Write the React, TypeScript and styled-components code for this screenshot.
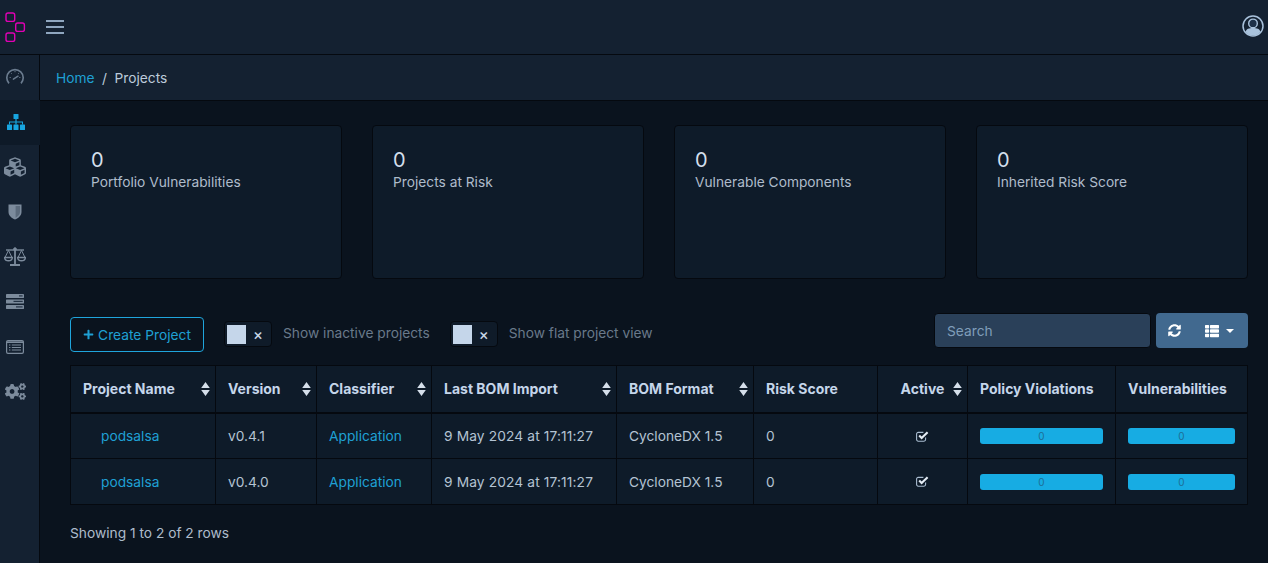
import React from 'react';
import styled, { createGlobalStyle } from 'styled-components';
import { FaCogs, FaCubes, FaPlus, FaSyncAlt, FaThList } from 'react-icons/fa';

const GlobalStyle = createGlobalStyle`
  html, body { margin: 0; padding: 0; height: 100%; }
  body {
    background: #0a131e;
    font-family: Inter, "Liberation Sans", sans-serif;
    font-size: 13.75px;
    color: #c8d6e6;
    overflow: hidden;
  }
`;

const Page = styled.div`
  width: 1268px;
  height: 563px;
  display: flex;
  flex-direction: column;
  overflow: hidden;
`;

const Header = styled.header`
  height: 54px;
  flex: none;
  display: flex;
  align-items: center;
  justify-content: space-between;
  background: #142131;
  border-bottom: 1px solid #05090f;
  padding: 0 4px;
`;

const HeaderLeft = styled.div`
  display: flex;
  align-items: center;
  gap: 20px;
`;

const MenuBars = styled.div`
  width: 18px;
  height: 14px;
  display: flex;
  flex-direction: column;
  justify-content: space-between;
  & > span { height: 2px; background: #8fa6bf; display: block; }
`;

const UserIcon = styled.svg`
  margin-bottom: 2px;
`;

const Body = styled.div`
  flex: 1;
  display: flex;
  min-height: 0;
`;

const Sidebar = styled.nav`
  width: 39px;
  flex: none;
  background: #142131;
  border-right: 1px solid #05090f;
  display: flex;
  flex-direction: column;
`;

const SideItem = styled.div<{ $active?: boolean }>`
  height: 45px;
  box-sizing: border-box;
  padding: 0 9px 2px 0;
  margin-right: ${(p) => (p.$active ? '-1px' : '0')};
  display: flex;
  align-items: center;
  justify-content: center;
  color: ${(p) => (p.$active ? '#17a5e0' : '#7c8b9c')};
  background: ${(p) => (p.$active ? '#0e1a28' : 'transparent')};
`;

const Content = styled.main`
  flex: 1;
  min-width: 0;
  display: flex;
  flex-direction: column;
`;

const Breadcrumb = styled.div`
  height: 45px;
  flex: none;
  display: flex;
  align-items: center;
  gap: 7.5px;
  padding: 0 16px;
  background: #142131;
  border-bottom: 1px solid #05090f;
  color: #bccbdb;
`;

const Link = styled.a`
  color: #1fa0d4;
`;

const Inner = styled.div`
  padding: 24px 20px 0 30px;
`;

const Cards = styled.section`
  display: grid;
  grid-template-columns: repeat(4, 272px);
  gap: 30px;
`;

const Card = styled.div`
  height: 154px;
  box-sizing: border-box;
  padding: 23px 20px;
  background: #0e1b29;
  border: 1px solid #05090f;
  border-radius: 4px;
`;

const CardValue = styled.div`
  font-size: 20px;
  line-height: 22px;
  color: #d3dfec;
`;

const CardLabel = styled.div`
  line-height: 22px;
  color: #aebccb;
`;

const Toolbar = styled.div`
  margin-top: 34px;
  height: 36px;
  display: flex;
  align-items: flex-start;
`;

const CreateButton = styled.button`
  width: 134px;
  height: 35px;
  margin-top: 4px;
  box-sizing: border-box;
  background: transparent;
  border: 1px solid #1fa5dc;
  border-radius: 4px;
  color: #1fa0d4;
  font: inherit;
  display: flex;
  align-items: center;
  justify-content: center;
  gap: 4px;
  svg { font-size: 11px; }
`;

const ToggleWrap = styled.div`
  display: flex;
  align-items: center;
  gap: 11px;
  margin-left: 20px;
  margin-top: 8px;
`;

const ToggleBox = styled.div`
  width: 48px;
  height: 26px;
  box-sizing: border-box;
  padding: 2px;
  background: #0f1b29;
  border: 1px solid #05090f;
  border-radius: 4px;
  display: flex;
  align-items: center;
  justify-content: space-between;
`;

const ToggleKnob = styled.span`
  width: 19px;
  height: 19px;
  background: #c5d6ea;
`;

const ToggleX = styled.span`
  width: 22px;
  text-align: center;
  color: #c8d6e6;
  font-size: 15px;
  font-weight: 500;
`;

const ToggleLabel = styled.span`
  color: #69798a;
  margin-top: -2px;
`;

const ToolbarRight = styled.div`
  margin-left: auto;
  display: flex;
  align-items: center;
  gap: 5px;
`;

const Search = styled.input`
  width: 217px;
  height: 35px;
  box-sizing: border-box;
  padding: 0 12px;
  background: #2a4059;
  border: 1px solid #05090f;
  border-radius: 4px;
  font: inherit;
  color: #c8d6e6;
  &::placeholder { color: #7f9db9; opacity: 1; }
`;

const ActionGroup = styled.div`
  width: 92px;
  height: 35px;
  box-sizing: border-box;
  background: #41698f;
  border-radius: 4px;
  color: #fff;
  display: flex;
  align-items: center;
  padding-left: 12px;
  font-size: 14px;
`;

const ListIcon = styled(FaThList)`
  margin-left: 24px;
`;

const Caret = styled.span`
  width: 0;
  height: 0;
  margin-left: 7px;
  border-left: 4px solid transparent;
  border-right: 4px solid transparent;
  border-top: 4px solid #fff;
`;

const Table = styled.table`
  margin-top: 16px;
  width: 1177px;
  table-layout: fixed;
  border-collapse: collapse;
  background: #0e1b29;
`;

const Th = styled.th<{ $center?: boolean }>`
  position: relative;
  height: 47px;
  padding: 0 12px;
  box-sizing: border-box;
  border: 1px solid #05090f;
  border-bottom-width: 2px;
  text-align: ${(p) => (p.$center ? 'center' : 'left')};
  font-size: 14px;
  font-weight: 700;
  color: #c5d6ea;
`;

const SortIcon = styled.svg`
  position: absolute;
  right: 5px;
  top: 16px;
`;

const Td = styled.td<{ $center?: boolean }>`
  height: 46px;
  padding: 0 12px;
  box-sizing: border-box;
  border: 1px solid #05090f;
  color: #b4c3d3;
  text-align: ${(p) => (p.$center ? 'center' : 'left')};
`;

const NameCell = styled(Td)`
  padding-left: 30px;
`;

const DateCell = styled(Td)`
  letter-spacing: 0.13px;
`;

const CheckIcon = styled.svg`
  display: inline-block;
  vertical-align: middle;
  margin-bottom: 2px;
`;

const Bar = styled.div`
  height: 16px;
  background: #17ace3;
  border-radius: 3px;
  color: #1d6f96;
  font-size: 10px;
  line-height: 16px;
  text-align: center;
`;

const Footer = styled.div`
  margin-top: 20px;
  color: #aebccb;
`;

function Logo() {
  return (
    <svg width="22" height="38" viewBox="0 0 22 38" fill="none" stroke="#e000b4" strokeWidth="1.4">
      <rect x="2" y="5" width="8.7" height="8.4" rx="2" />
      <rect x="11.7" y="15" width="8.7" height="8.4" rx="2" />
      <rect x="2" y="25" width="8.7" height="8.4" rx="2" />
    </svg>
  );
}

function User() {
  return (
    <UserIcon width="22" height="22" viewBox="0 0 22 22">
      <circle cx="11" cy="11" r="10" fill="none" stroke="#a9c2dc" strokeWidth="1.5" />
      <path d="M3.6 17 C4.2 13.8 7 13 11 13 C15 13 17.8 13.8 18.4 17 C16.6 19.4 14 20.6 11 20.6 C8 20.6 5.4 19.4 3.6 17 Z" fill="#a9c2dc" />
      <circle cx="11" cy="8.4" r="4.3" fill="#1d3048" stroke="#a9c2dc" strokeWidth="1.4" />
    </UserIcon>
  );
}

function Gauge() {
  return (
    <svg width="18" height="18" viewBox="0 0 18 18" fill="none" stroke="#6b7c8f">
      <path d="M3 15.4 A8.2 8.2 0 1 1 15 15.4" strokeWidth="1.6" />
      <path d="M3.6 9.5 H4.8 M5 5 L5.8 5.8 M9 3 V4.2 M13 5 L12.2 5.8 M14.4 9.5 H13.2" strokeWidth="0.9" />
      <path d="M7.4 11.2 L12 8.2" strokeWidth="1.5" strokeLinecap="round" />
    </svg>
  );
}

function Sitemap() {
  return (
    <svg width="18" height="16" viewBox="0 0 18 16" fill="currentColor">
      <rect x="6.5" y="0" width="5" height="5" rx="0.6" />
      <rect x="0" y="10.5" width="5" height="5.5" rx="0.6" />
      <rect x="6.5" y="10.5" width="5" height="5.5" rx="0.6" />
      <rect x="13" y="10.5" width="5" height="5.5" rx="0.6" />
      <path d="M8.4 5 H9.6 V7.4 H16 V10.5 H15 V8.4 H9.6 V10.5 H8.4 V8.4 H3 V10.5 H2 V7.4 H8.4 Z" />
    </svg>
  );
}

function Shield() {
  return (
    <svg width="14" height="16" viewBox="0 0 14 16">
      <path d="M0.5 0.5 H13.5 V8 C13.5 11.5 10.5 14 7 15.6 C3.5 14 0.5 11.5 0.5 8 Z" fill="currentColor" />
      <path d="M7.6 2 H12 V8 C12 10.4 10 12.4 7.6 13.7 Z" fill="#5c6b7c" />
    </svg>
  );
}

function Scale() {
  return (
    <svg width="22" height="19" viewBox="0 0 22 19" fill="none" stroke="currentColor">
      <path d="M11 1 V17 M6 18 H16" strokeWidth="1.8" />
      <path d="M2 3 H20" strokeWidth="1.4" />
      <circle cx="11" cy="2.2" r="1.4" fill="currentColor" />
      <path d="M4.5 3.4 L1 10.5 M4.5 3.4 L8 10.5 M17.5 3.4 L14 10.5 M17.5 3.4 L21 10.5" strokeWidth="1" />
      <path d="M0.6 10.5 H8.4 C8.2 12.6 6.6 13.8 4.5 13.8 C2.4 13.8 0.8 12.6 0.6 10.5 Z" strokeWidth="1.4" />
      <path d="M13.6 10.5 H21.4 C21.2 12.6 19.6 13.8 17.5 13.8 C15.4 13.8 13.8 12.6 13.6 10.5 Z" strokeWidth="1.4" />
    </svg>
  );
}

function Server() {
  return (
    <svg width="18" height="15" viewBox="0 0 18 15">
      <rect x="0" y="0" width="18" height="4" rx="0.4" fill="currentColor" />
      <rect x="0" y="5.5" width="18" height="4" rx="0.4" fill="currentColor" />
      <rect x="0" y="11" width="18" height="4" rx="0.4" fill="currentColor" />
      <rect x="13" y="1.3" width="3.6" height="1.2" fill="#243345" />
      <rect x="7.5" y="6.8" width="9.2" height="1.2" fill="#243345" />
      <rect x="10" y="12.3" width="6.6" height="1.2" fill="#243345" />
    </svg>
  );
}

function ListAlt() {
  return (
    <svg width="18" height="14" viewBox="0 0 18 14" fill="none" stroke="currentColor">
      <rect x="0.6" y="0.6" width="16.8" height="12.8" rx="1.4" strokeWidth="1.2" />
      <path d="M0.6 2.2 H17.4" strokeWidth="1.6" />
      <path d="M3 5 H4.4 M3 7.5 H4.4 M3 10 H4.4 M5.8 5 H15 M5.8 7.5 H15 M5.8 10 H15" strokeWidth="1.1" />
    </svg>
  );
}

function Check() {
  return (
    <CheckIcon width="13" height="11" viewBox="0 0 13 11" fill="none">
      <path d="M9.6 6.4 V8.6 A1.6 1.6 0 0 1 8 10.2 H2.2 A1.6 1.6 0 0 1 0.6 8.6 V3 A1.6 1.6 0 0 1 2.2 1.4 H7.4" stroke="#a9bcd0" strokeWidth="1.1" />
      <path d="M3.2 4.6 L5.6 7 L11.6 1.2" stroke="#e4ecf4" strokeWidth="2.1" />
    </CheckIcon>
  );
}

function Sort() {
  return (
    <SortIcon width="9" height="14" viewBox="0 0 9 14" fill="#d5dfea">
      <path d="M4.5 0 L8.8 6 H0.2 Z M4.5 14 L0.2 8 H8.8 Z" />
    </SortIcon>
  );
}

const columns = [
  { label: 'Project Name', width: 145, sort: true },
  { label: 'Version', width: 101, sort: true },
  { label: 'Classifier', width: 115, sort: true },
  { label: 'Last BOM Import', width: 185, sort: true },
  { label: 'BOM Format', width: 137, sort: true },
  { label: 'Risk Score', width: 124, sort: false },
  { label: 'Active', width: 90, sort: true, center: true },
  { label: 'Policy Violations', width: 148, sort: false },
  { label: 'Vulnerabilities', width: 132, sort: false },
];

const rows = [
  { name: 'podsalsa', version: 'v0.4.1' },
  { name: 'podsalsa', version: 'v0.4.0' },
];

const cards = ['Portfolio Vulnerabilities', 'Projects at Risk', 'Vulnerable Components', 'Inherited Risk Score'];

export default function App() {
  return (
    <Page>
      <GlobalStyle />
      <Header>
        <HeaderLeft>
          <Logo />
          <MenuBars><span /><span /><span /></MenuBars>
        </HeaderLeft>
        <User />
      </Header>
      <Body>
        <Sidebar>
          <SideItem><Gauge /></SideItem>
          <SideItem $active><Sitemap /></SideItem>
          <SideItem><FaCubes size={22} /></SideItem>
          <SideItem><Shield /></SideItem>
          <SideItem><Scale /></SideItem>
          <SideItem><Server /></SideItem>
          <SideItem><ListAlt /></SideItem>
          <SideItem><FaCogs size={21} /></SideItem>
        </Sidebar>
        <Content>
          <Breadcrumb>
            <Link>Home</Link>
            <span>/</span>
            <span>Projects</span>
          </Breadcrumb>
          <Inner>
            <Cards>
              {cards.map((c) => (
                <Card key={c}>
                  <CardValue>0</CardValue>
                  <CardLabel>{c}</CardLabel>
                </Card>
              ))}
            </Cards>
            <Toolbar>
              <CreateButton><FaPlus /> Create Project</CreateButton>
              <ToggleWrap>
                <ToggleBox><ToggleKnob /><ToggleX>×</ToggleX></ToggleBox>
                <ToggleLabel>Show inactive projects</ToggleLabel>
              </ToggleWrap>
              <ToggleWrap>
                <ToggleBox><ToggleKnob /><ToggleX>×</ToggleX></ToggleBox>
                <ToggleLabel>Show flat project view</ToggleLabel>
              </ToggleWrap>
              <ToolbarRight>
                <Search placeholder="Search" />
                <ActionGroup>
                  <FaSyncAlt size={13} />
                  <ListIcon size={14} />
                  <Caret />
                </ActionGroup>
              </ToolbarRight>
            </Toolbar>
            <Table>
              <colgroup>
                {columns.map((c) => <col key={c.label} width={c.width} />)}
              </colgroup>
              <thead>
                <tr>
                  {columns.map((c) => (
                    <Th key={c.label} $center={c.center}>{c.label}{c.sort && <Sort />}</Th>
                  ))}
                </tr>
              </thead>
              <tbody>
                {rows.map((r) => (
                  <tr key={r.version}>
                    <NameCell><Link>{r.name}</Link></NameCell>
                    <Td>{r.version}</Td>
                    <Td><Link>Application</Link></Td>
                    <DateCell>9 May 2024 at 17:11:27</DateCell>
                    <Td>CycloneDX 1.5</Td>
                    <Td>0</Td>
                    <Td $center><Check /></Td>
                    <Td><Bar>0</Bar></Td>
                    <Td><Bar>0</Bar></Td>
                  </tr>
                ))}
              </tbody>
            </Table>
            <Footer>Showing 1 to 2 of 2 rows</Footer>
          </Inner>
        </Content>
      </Body>
    </Page>
  );
}
